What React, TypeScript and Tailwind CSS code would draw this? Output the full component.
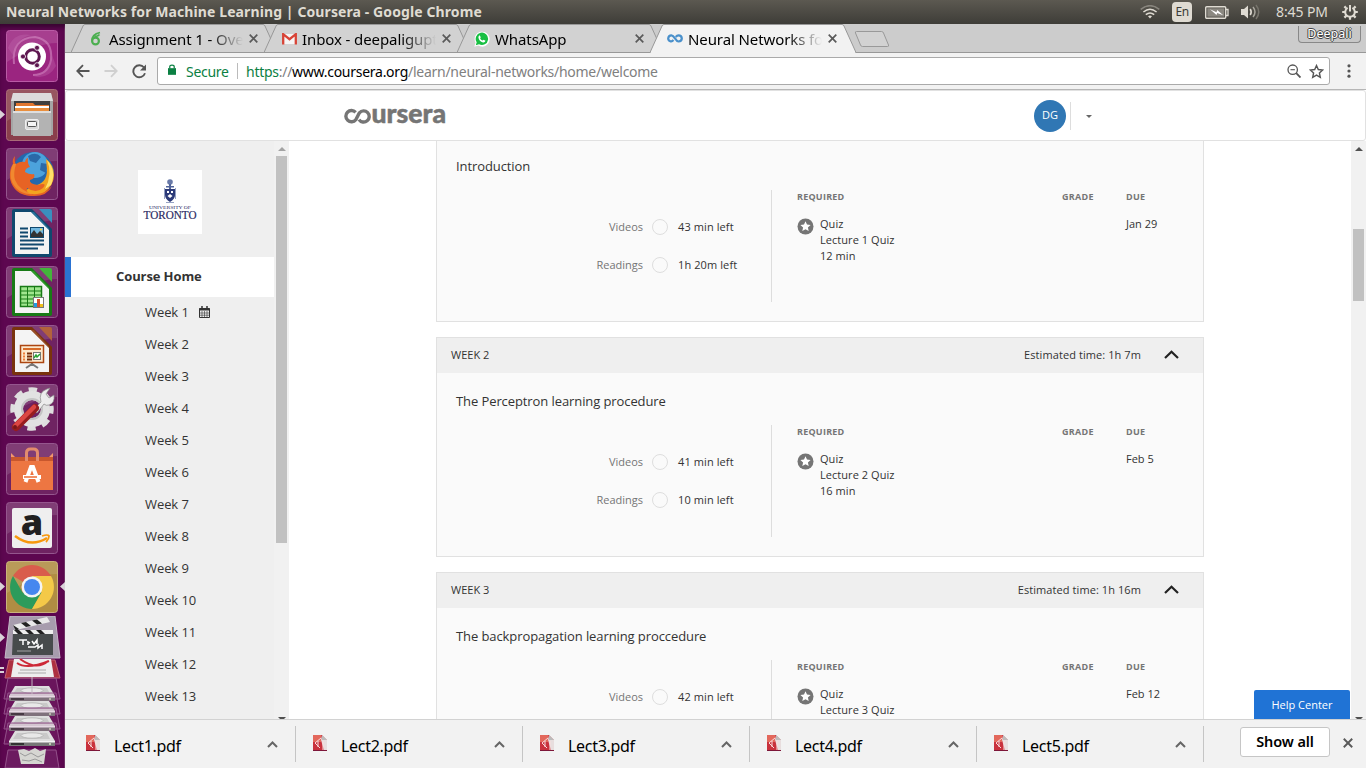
import React from "react";

const ui = "font-['Noto_Sans',sans-serif]";

function Titlebar() {
  return (
    <header className="flex h-6 shrink-0 items-center justify-between bg-gradient-to-b from-[#5c5951] to-[#3e3d38] pl-1.5 pr-[7px]">
      <h1 className="whitespace-nowrap text-[14px] font-bold leading-6 tracking-[0.1px] text-[#dfdbd2]">
        Neural Networks for Machine Learning | Coursera - Google Chrome
      </h1>
      <div className="flex items-center text-[#dfdbd2]">
        <svg width="20" height="14" viewBox="0 0 20 14" fill="none" stroke="currentColor" strokeWidth="1.5">
          <path d="M.7 4.3Q10-3 19.3 4.3" stroke="#88857d" />
          <path d="M3.4 7Q10 1.6 16.6 7" />
          <path d="M5.8 9.7Q10 6.2 14.2 9.7" />
          <path d="M8 11.2Q10 9.8 12 11.2L10 13.6Z" fill="currentColor" stroke="none" />
        </svg>
        <span className="ml-3 flex h-5 w-5 items-center justify-center rounded-sm bg-[#dfdbd2] text-[12px] tracking-[-0.5px] text-[#3c3b37]">En</span>
        <svg className="ml-[13px]" width="24" height="13" viewBox="0 0 24 13">
          <rect x=".7" y=".7" width="20" height="11.6" rx="1" fill="none" stroke="#dfdbd2" strokeWidth="1.4" />
          <rect x="2.3" y="2.3" width="17" height="8.4" fill="#8b8880" />
          <path d="M21 3.5h2v6h-2" fill="none" stroke="#dfdbd2" strokeWidth="1.3" />
          <path d="M5 3.2l6.5 3 .7-2.2 6 5.3-6-2.3-.7 2z" fill="#fff" />
        </svg>
        <svg className="ml-3" width="20" height="16" viewBox="0 0 20 16" fill="none">
          <path d="M0 5h3l4-3.5v13L3 11H0z" fill="#dfdbd2" />
          <path d="M9.2 5q2 3 0 6" stroke="#dfdbd2" strokeWidth="1.6" />
          <path d="M12 3q4 5 0 10" stroke="#a9a69d" strokeWidth="1.5" />
          <path d="M15 1q5.5 7 0 14" stroke="#77746c" strokeWidth="1.5" />
        </svg>
        <span className="ml-[15px] w-[53px] whitespace-nowrap text-[14px] leading-6 tracking-[-0.1px]">8:45 PM</span>
        <svg className="ml-3" width="18" height="18" viewBox="-9 -9 18 18" fill="none" stroke="currentColor">
          <path d="M-2.4-4.1A4.8 4.8 0 1 0 2.4-4.1" strokeWidth="2" />
          <path d="M0-7V-.5" strokeWidth="2" />
          <path d="M5 0h2.8M-5 0h-2.8M0 5v2.8M3.6 3.6l2 2M-3.6 3.6l-2 2M3.8-3.8l1.8-1.8M-3.8-3.8l-1.8-1.8" strokeWidth="2.2" />
        </svg>
      </div>
    </header>
  );
}

function Tile({ children, fill = "#6f2362", stroke = "#95568e" }: { children: React.ReactNode; fill?: string; stroke?: string }) {
  return (
    <svg className="shrink-0" width="52" height="52" viewBox="0 0 52 52">
      <rect x=".5" y=".5" width="51" height="51" rx="3" fill={fill} stroke={stroke} />
      <path d="M1 3q0-2 2-2h46q2 0 2 2v10Q30 13 1 32z" fill="#fff" opacity=".12" />
      {children}
    </svg>
  );
}

function OfficeDoc({ dark, light, children }: { dark: string; light: string; children: React.ReactNode }) {
  return (
    <Tile>
      <path d="M8 2h18l20 20v26q0 2-2 2H8q-2 0-2-2V4q0-2 2-2z" fill={dark} />
      <path d="M33 2h11q2 0 2 2v12z" fill={light} />
      <path d="M9 5h16l18 18v24H9z" fill="#f4f4f4" />
      <path d="M25 5l18 18V21.500L28 5z" fill={light} opacity=".55" />
      {children}
    </Tile>
  );
}

function Drive({ y }: { y: number }) {
  return (
    <g transform={`translate(0 ${y})`}>
      <path d="M8-8h48l4 21H4z" fill="#a45a98" fillOpacity=".18" stroke="#93518a" />
      <path d="M15 0h34l6 10H9z" fill="#dedede" />
      <path d="M17 2h30l3 6H13z" fill="#c9c9c9" />
      <ellipse cx="32" cy="4.5" rx="11" ry="2.7" fill="#e8e8e8" stroke="#aaa" strokeWidth=".7" />
      <path d="M9 10h46v5H9z" fill="#777" />
      <path d="M9 10h46v1.5H9z" fill="#f4f4f4" />
      <path d="M11 13h13" stroke="#333" strokeWidth="2" />
      <circle cx="50" cy="13" r="1" fill="#d6e8c3" />
    </g>
  );
}

function Launcher() {
  return (
    <aside className="relative flex w-[65px] shrink-0 flex-col bg-[#5d0750] shadow-[inset_0_5px_5px_-2px_#35052e,inset_-1px_0_0_#7b3a70]">
      <div className="flex flex-col gap-[7px] pl-1.5 pt-1.5">
        <Tile fill="#9b2580" stroke="#b95ba5">
          <path d="M8 34Q5 8 29 7q18 3 16 23-3 15-18 15" fill="none" stroke="#d48bc3" strokeWidth="2" opacity=".6" />
          <path d="M2 18Q8 2 25 5q-18 4-16 23M50 36q-8 14-23 10 16-3 19-21" fill="#c367ae" opacity=".35" />
          <circle cx="26" cy="26.5" r="14" fill="#fff" />
          <circle cx="26.5" cy="26.5" r="6.8" fill="none" stroke="#5e1750" strokeWidth="3" />
          <g stroke="#fff" strokeWidth="1.5"><path d="M15 26.500h5M30 20l3-5M30 33l3 5" /></g>
          <g fill="#5e1750" stroke="#fff" strokeWidth=".7"><circle cx="17" cy="26.5" r="2.5" /><circle cx="31" cy="17.8" r="2.5" /><circle cx="31" cy="35.2" r="2.5" /></g>
        </Tile>
        <Tile fill="#8a3f4c" stroke="#a96b78">
          <path d="M7 4h38l2 8v34H5V12z" fill="#a5a5a5" /><path d="M7 4h38l2 8H5z" fill="#dcdcdc" />
          <path d="M8 12h36v10H8z" fill="#3f3f3f" />
          <path d="M10 14h17l2 2h14v7H10z" fill="#e1762e" /><path d="M9 17h34v5H9z" fill="#fff" /><path d="M9 19h34v3H9z" fill="#e98f3e" />
          <path d="M7 22h38v25H7z" fill="#b3b3b3" /><path d="M7 22h38v2H7z" fill="#dedede" />
          <rect x="19.5" y="30.5" width="13" height="10" rx="1.5" fill="#d9d9d9" stroke="#eee" />
          <rect x="21.5" y="32.5" width="9" height="5" rx="1" fill="#f5f5f5" stroke="#555" />
        </Tile>
        <Tile>
          <circle cx="27" cy="25" r="21" fill="#2368ad" />
          <circle cx="29" cy="17" r="13" fill="#4ca2dc" /><path d="M22 8q8-5 13 1l-5 6-6-2zM35 15l7 1-2 9-6-3z" fill="#2a69a8" />
          <path d="M40 11Q48 17 48 27T38 45Q27 50 15 45L27 38Q41 36 41 22z" fill="#f2a41f" />
          <path d="M41 12Q51 23 45 37L39 41Q47 26 41 12" fill="#ffe06a" />
          <path d="M9 8q-1 6 1 8 4-3 9-2 1-4 3-4-1 5 2 9-5 1-5 5 5 3 9 2 2 4-4 6-1 4 8 5 10-3 5 3-7 6-16 0-2 7 10 6 9-1 15-8Q41 49 25 48 8 47 4 31 3 21 7 16q-1-5 2-8z" fill="#e76324" />
          <path d="M7 16Q1 30 10 40q7 7 17 6-14-4-18-14-2-6 1-16z" fill="#f59a35" opacity=".7" />
        </Tile>
        <OfficeDoc dark="#10486e" light="#3a8fbf">
          <g stroke="#10486e" strokeWidth="2"><path d="M14 21.500h8M14 25.500h8M14 29.500h8M14 33.500h24M14 37.500h24M14 41.500h18" /></g>
          <rect x="24.5" y="20.5" width="13" height="10" fill="#73b8df" stroke="#10486e" /><path d="M25 30v-3l3-4 3 4 3-3 3 3v3z" fill="#333" /><circle cx="35" cy="22.5" r="1" fill="#ffd83a" />
        </OfficeDoc>
        <OfficeDoc dark="#187a16" light="#43b53b">
          <rect x="14.5" y="20.5" width="21" height="20" fill="#a0e68e" stroke="#187a16" strokeWidth="1.5" />
          <path d="M14 25h22M14 29h22M14 33h22M14 37h22M21.500 20v21M28.500 20v21" stroke="#187a16" />
          <rect x="27.5" y="31.5" width="10" height="10" fill="#fff" stroke="#777" /><path d="M28 37h3v4h-3z" fill="#239be0" /><path d="M31 33h3v8h-3z" fill="#d7502b" /><path d="M34 38h3v3h-3z" fill="#eebf1b" />
        </OfficeDoc>
        <OfficeDoc dark="#79330d" light="#b2623c">
          <path d="M26 37v4M20 43l6-4 6 4" stroke="#777" strokeWidth="2" fill="none" />
          <rect x="14.5" y="20.5" width="23" height="17" fill="#fce8cc" stroke="#ac4611" strokeWidth="1.5" />
          <path d="M17 23h18v2H17z" fill="#d76b28" /><g strokeWidth="1.8" stroke="#77300b"><path d="M21 28.500h5M21 31.500h5M21 34.500h5" /></g><path d="M17 28.500h2M17 31.500h2M17 34.500h2" stroke="#ee7e39" strokeWidth="2" />
          <rect x="27.5" y="27.5" width="7" height="7" fill="#fff" stroke="#777" /><path d="M28 33l2-3 1 2 3-3" stroke="#25a332" fill="none" strokeWidth="1.5" />
        </OfficeDoc>
        <Tile>
          <circle cx="26" cy="25" r="19.5" fill="none" stroke="#dedede" strokeWidth="4.5" strokeDasharray="8.500 6.815" strokeDashoffset="4" />
          <circle cx="26" cy="25" r="13.5" fill="none" stroke="#e2e2e2" strokeWidth="9" /><circle cx="26" cy="25" r="10" fill="none" stroke="#c4c4c4" strokeWidth="2" />
          <path d="M27 26l8-8q-3-10 6-13l3-1-4 6 3 4 5-3q1 8-5 10-3 1-5-1l-7 9z" fill="#ececec" stroke="#888" strokeWidth=".7" />
          <path d="M10 43L29 24" stroke="#971d1e" strokeWidth="8" strokeLinecap="round" /><path d="M9 42L28 23" stroke="#db4643" strokeWidth="4.5" strokeLinecap="round" /><circle cx="9" cy="43" r="2" fill="#771818" />
        </Tile>
        <Tile>
          <path d="M5 14h42v33H5z" fill="#ed7642" /><path d="M5 14h42v4H5z" fill="#c8572d" /><path d="M5 10l4 4H5zM47 10l-4 4h4z" fill="#f2976d" />
          <path d="M20.500 18V10q0-4 4-4h3q4 0 4 4v8" fill="none" stroke="#e38c6d" strokeWidth="3" />
          <path d="M19.500 39l5.500-15h2l5.500 15" fill="none" stroke="#fff" strokeWidth="4" /><path d="M17 32h18v4H17z" fill="#fff" /><path d="M18 34h13" stroke="#ed6b32" strokeWidth="1.5" />
        </Tile>
        <Tile>
          <rect x="6" y="6" width="40" height="40" rx="2" fill="#efefef" />
          <text x="26" y="33" textAnchor="middle" fontFamily="Open Sans, sans-serif" fontSize="36" fontWeight="800" fill="#202020">a</text>
          <path d="M9 34q16 12 32 2" stroke="#f7980d" strokeWidth="2.5" fill="none" /><path d="M36 34q6-2 7 0 0 3-3 6" stroke="#f7980d" strokeWidth="1.8" fill="none" />
        </Tile>
        <Tile fill="#b08d43" stroke="#cab27c">
          <path d="M26 26L7 15A22 22 0 0 1 45 15H26z" fill="#d95c4c" />
          <path d="M16.500 31.500L7 15A22 22 0 0 0 26 48L35.500 31.500z" fill="#2c9b5b" />
          <path d="M26 15h19A22 22 0 0 1 26 48l9.500-16.500z" fill="#f4c948" />
          <circle cx="26" cy="26" r="10.5" fill="#f4f4f4" /><circle cx="26" cy="26" r="8" fill="#4687ef" />
        </Tile>
      </div>
      <svg className="absolute left-0 top-[592px]" width="65" height="152" viewBox="0 0 65 152">
        <path d="M9 44h46l5 18H5z" fill="#ad3040" stroke="#c26170" />
        <path d="M14 43h37l3 18H11z" fill="#eee" /><path d="M17 47q10 7 32-2M20 43q17 12 28 2" fill="none" stroke="#cd2937" strokeWidth="2" /><path d="M20 54h26M18 57h28" stroke="#aaa" />
        <path d="M10 0h45l5 42H5z" fill="#a79cad" stroke="#c5b9c8" />
        <path d="M13 15h40v24H12z" fill="#474b4c" /><path d="M13 14h40v4H13z" fill="#eee" /><path d="M14 14l4 4h5l-4-4zM25 14l4 4h5l-4-4zM36 14l4 4h5l-4-4z" fill="#222" />
        <path d="M13 9L47 1l3 5-34 8z" fill="#e9e9e9" /><path d="M21 7l5 4 5-1-5-4zM32 4.500l5 4 5-1-5-4zM13 9l6 4-3 2z" fill="#222" />
        <path d="M19 24h8M23 24v5M28 29v-3l2 1M32 25l2 3 3-4v4M28 31h7l3-2v3l4-3v4" stroke="#fff" strokeWidth="1.5" fill="none" /><path d="M17 35h14" stroke="#a4a4a4" />
        <Drive y={70} /><Drive y={85} /><Drive y={100} /><Drive y={115} />
        <path d="M8 134h48l3 18H5z" fill="#9a5791" fillOpacity=".25" stroke="#93518a" />
        <path d="M18 134l6-1 5 2 6-3 5 3 6-2-2 15H21z" fill="#d6d6d2" /><path d="M20 137l5 3 6-3 7 4 6-3M22 144l7 1 6-2 7 3" stroke="#999" fill="none" />
        <path d="M32 61v17" stroke="#c1b5bf" />
      </svg>
      <svg className="absolute left-0 top-0" width="65" height="744" viewBox="0 0 65 744">
        <g fill="#d9d2d8"><path d="M0 86l5 4.500-5 4.500zM0 558l5 4.500-5 4.500zM65 558l-5 4.500 5 4.500zM0 609l5 4.500-5 4.500zM0 643h4v2H0zM0 647h4v2H0z" /></g>
      </svg>
    </aside>
  );
}

function Close({ size = 9 }: { size?: number }) {
  return (
    <svg width={size} height={size} viewBox="0 0 9 9" stroke="#5a5a5a" strokeWidth="1.7">
      <path d="M.7.7l7.600 7.600M8.300.7L.7 8.300" />
    </svg>
  );
}

function Tab({ icon, title, active }: { icon: React.ReactNode; title: string; active?: boolean }) {
  return (
    <div className="relative -mr-[13px] flex h-[29px] w-[206px] shrink-0 items-center pl-[17px]">
      <svg className="absolute left-0 top-0" width="206" height="29" viewBox="0 0 206 29">
        <path d="M0 28.500L12 2q.6-1.500 2-1.500h178q1.400 0 2 1.500l12 26.500" fill={active ? "#f2f2f2" : "#d2d2d2"} stroke="#989898" />
        {active && <path d="M1 28.500h204" stroke="#f2f2f2" />}
        {!active && <path d="M0 28.500h206" stroke="#989898" />}
      </svg>
      <span className="relative flex w-4 justify-center">{icon}</span>
      <span className="relative ml-[5px] w-[134px] overflow-hidden whitespace-nowrap text-[15px] leading-7 tracking-[-0.1px] text-black [mask-image:linear-gradient(to_right,#000_100px,transparent_134px)]">{title}</span>
      <span className="relative ml-1.5"><Close /></span>
    </div>
  );
}

function Tabs() {
  return (
    <div className="flex h-[29px] shrink-0 border-b border-[#989898] bg-[#ccc] pl-1.5">
      <Tab title="Assignment 1 - Ove" icon={<svg width="14" height="15" viewBox="0 0 14 15" fill="none" stroke="#4caf50"><circle cx="6.5" cy="10" r="3.4" strokeWidth="2.2" /><path d="M3.200 9.500Q2.500 3.500 11 1.500M5.500 5q3 1 5-1.500" strokeWidth="1.7" /></svg>} />
      <Tab title="Inbox - deepaligupt" icon={<svg width="15" height="12" viewBox="0 0 15 12"><path d="M1 1h13v10H1z" fill="#f5f5f5" /><path d="M1.200 11.500V1.200l6.300 5 6.300-5v10.300" fill="none" stroke="#d84437" strokeWidth="2.3" /></svg>} />
      <Tab title="WhatsApp" icon={<svg width="16" height="16" viewBox="0 0 16 16"><path d="M.3 15.700l1.200-4A7.500 7.500 0 1 1 4.300 14.600z" fill="#fff" /><path d="M1.800 14.200l.9-3A6.200 6.200 0 1 1 5 13.300z" fill="#18bf43" /><path d="M5.600 4.300l1.200 2-.7 1q.8 1.600 2.400 2.300l1-.9 2 1.100q-.6 2-2.500 1.700Q5.100 10.500 4.400 6.500q.1-1.600 1.200-2.200z" fill="#fff" /></svg>} />
      <Tab active title="Neural Networks fo" icon={<svg width="16" height="9" viewBox="0 0 16 9" fill="none" stroke="#4a90cb" strokeWidth="2.2"><path d="M6.500 6.100Q4.900 7.900 3.300 7.200 1.100 6.500 1.200 4.300 1.600 1.500 4.400 1.300 6 1.200 8 4.300T11.500 7.500Q14.700 7.200 14.800 4.400 14.600 1.300 11.500 1.300 10 1.300 8.800 3" /></svg>} />
      <svg className="ml-[11px] mt-1.5" width="37" height="19" viewBox="0 0 37 19"><path d="M2.500 1.500h25q1.500 0 2 1.500l5 12q.6 1.500-1 1.500h-25q-1.500 0-2-1.500l-5-12q-.6-1.500 1-1.500z" fill="#d2d2d2" stroke="#999" /></svg>
      <span className="ml-auto mr-[5px] mt-0.5 flex h-[17px] w-[63px] items-center justify-center rounded-b-[4px] border border-t-0 border-[#888] bg-[#c7c7c7] text-[12.5px] text-white [text-shadow:1px_0_#444,-1px_0_#444,0_1px_#444,0_-1px_#444]">Deepali</span>
    </div>
  );
}

function Toolbar() {
  return (
    <div className="flex h-[37px] shrink-0 items-center border-b border-[#b6b6b6] bg-[#f2f2f2] pl-[11px]">
      <svg width="14" height="14" viewBox="0 0 14 14" stroke="#555" strokeWidth="1.8" fill="none"><path d="M13.500 7H1.500M7 1.200L1.300 7 7 12.800" /></svg>
      <svg className="ml-3.5" width="14" height="14" viewBox="0 0 14 14" stroke="#d0d0d0" strokeWidth="1.8" fill="none"><path d="M.5 7h12M7 1.200L12.700 7 7 12.800" /></svg>
      <svg className="ml-3.5" width="15" height="15" viewBox="0 0 15 15" stroke="#555" strokeWidth="1.9" fill="none"><path d="M13 9.300A6 6 0 1 1 12 3.500" /><path d="M14 .5v6H8z" fill="#555" stroke="none" /></svg>
      <div className="ml-2.5 flex h-7 w-[1173px] items-center rounded-[3px] border border-[#aaa] bg-white pl-2.5">
        <svg className="-mt-1" width="8" height="11" viewBox="0 0 9 12"><path d="M0 4.500h9V12H0z" fill="#0b8043" /><path d="M2 5V3q0-2 2.500-2T7 3v2" fill="none" stroke="#0b8043" strokeWidth="1.4" /></svg>
        <span className="ml-2.5 w-[43px] whitespace-nowrap text-[14px] tracking-[-0.3px] text-[#0b8043]">Secure</span>
        <span className="ml-2 mr-2 h-4 w-px bg-[#bbb]" />
        <span className="whitespace-nowrap text-[14px] tracking-[-0.27px] text-[#808080]"><span className="text-[#0b8043]">https</span>://<span className="text-black">www.coursera.org</span>/learn/neural-networks/home/welcome</span>
        <svg className="ml-auto" width="14" height="14" viewBox="0 0 14 14" fill="none" stroke="#555" strokeWidth="1.3"><circle cx="5.7" cy="5.7" r="4.7" /><path d="M9.200 9.200L13.500 13.500" strokeWidth="1.8" /><path d="M3.500 5.700h4.400" strokeWidth="1.1" /></svg>
        <svg className="ml-2 mr-[5px]" width="15" height="15" viewBox="0 0 15 15" fill="none" stroke="#555" strokeWidth="1.4"><path d="M7.500 1.500l1.800 4 4.400.5-3.300 3 .9 4.300-3.800-2.200-3.800 2.200.9-4.300-3.300-3 4.400-.5z" /></svg>
      </div>
      <svg className="ml-[17px]" width="4" height="14" viewBox="0 0 4 14" fill="#555"><circle cx="2" cy="1.8" r="1.6" /><circle cx="2" cy="7" r="1.6" /><circle cx="2" cy="12.2" r="1.6" /></svg>
    </div>
  );
}

function SiteHeader() {
  return (
    <div className="flex h-[51px] shrink-0 items-center rounded-[3px] border border-[#e1e1e1] bg-white">
      <svg className="ml-[278px]" width="103" height="18" viewBox="0 0 103 18">
        <path d="M11.600 5.400A5.600 5.600 0 1 0 11.800 12.700L15.400 5.800A5.600 5.600 0 1 1 15 12.600" fill="none" stroke="#757575" strokeWidth="3.4" strokeLinejoin="round" />
        <text x="27.5" y="15.8" textLength="74.5" lengthAdjust="spacingAndGlyphs" fontFamily="Lato, sans-serif" fontWeight="900" fontSize="27" fill="#757575" stroke="#757575" strokeWidth=".5">ursera</text>
      </svg>
      <span className="ml-[587px] flex h-8 w-8 items-center justify-center rounded-full bg-[#3077b4] text-[11px] text-white">DG</span>
      <span className="ml-1 h-7 w-px bg-[#ddd]" />
      <svg className="ml-[15px] mt-0.5" width="6" height="3" viewBox="0 0 6 3"><path d="M0 0h6L3 3z" fill="#666" /></svg>
    </div>
  );
}

function Sidebar() {
  const weeks = Array.from({ length: 13 }, (_, i) => i + 1);
  return (
    <nav className="flex w-[224px] shrink-0 bg-[#efefef]">
      <div className="flex w-[209px] flex-col">
        <div className="ml-[73px] mt-[29px] flex h-16 w-16 shrink-0 flex-col items-center bg-white pt-[9px] text-[#2b2a63]">
          <svg width="12" height="25" viewBox="0 0 12 25"><circle cx="6" cy="3" r="2.8" fill="#697aa8" /><path d="M5 5h2v5H5zM2 7h8v1.500H2z" fill="#51649a" /><path d="M1 10h10v6q0 4-5 7-5-3-5-7z" fill="#2c3a78" /><path d="M3 12h2v2H3zM7 12h2v2H7zM3.500 17L6 15l2.500 2L6 19z" fill="#fff" /><path d="M.5 9v11M11.500 9v11M2 23.500h8" stroke="#94a1c2" /></svg>
          <svg width="56" height="16" viewBox="0 0 56 16" fill="currentColor" fontFamily="Liberation Serif, serif"><text x="7" y="5" fontSize="5" textLength="42" lengthAdjust="spacingAndGlyphs">UNIVERSITY OF</text><text x="1.5" y="15.2" fontSize="11.5" textLength="53" lengthAdjust="spacingAndGlyphs" stroke="currentColor" strokeWidth=".2">TORONTO</text></svg>
        </div>
        <div className="mt-[23px] flex h-10 shrink-0 items-center border-l-[6px] border-[#2a73d3] bg-white pl-[45px] text-[13px] font-bold tracking-[-0.1px] text-[#333]">Course Home</div>
        {weeks.map((w) => (
          <div key={w} className="flex h-8 shrink-0 items-center pl-20 text-[13px] tracking-[-0.08px] text-[#333]">
            Week {w}
            {w === 1 && <svg className="-mt-0.5 ml-2.5" width="11" height="12" viewBox="0 0 11 12" fill="none" stroke="#333"><path d="M.5 2.500h10v9H.5z" /><path d="M0 3.500h11" strokeWidth="2" /><path d="M3 0v3.500M8 0v3.500" strokeWidth="1.5" /><path d="M3 5v6.500M5.500 5v6.500M8 5v6.500M1 7h9M1 9.200h9" strokeWidth=".6" /></svg>}
          </div>
        ))}
      </div>
      <div className="flex w-[15px] flex-col items-center justify-between bg-[#f1f1f1] pt-[6px]">
        <div className="flex flex-col items-center">
          <svg width="8" height="4" viewBox="0 0 8 4"><path d="M0 4l4-4 4 4z" fill="#a3a3a3" /></svg>
          <div className="mt-[5px] h-[387px] w-[11px] bg-[#c1c1c1]" />
        </div>
        <svg width="8" height="2" viewBox="0 0 8 2"><path d="M0 0h8L6 2H2z" fill="#505050" /></svg>
      </div>
    </nav>
  );
}

type Week = { n: number; time: string; title: string; videos: string; readings: string; quiz: string; due: string };
const data: Week[] = [
  { n: 1, time: "2h 15m", title: "Introduction", videos: "43 min", readings: "1h 20m", quiz: "12 min", due: "Jan 29" },
  { n: 2, time: "1h 7m", title: "The Perceptron learning procedure", videos: "41 min", readings: "10 min", quiz: "16 min", due: "Feb 5" },
  { n: 3, time: "1h 16m", title: "The backpropagation learning proccedure", videos: "42 min", readings: "10 min", quiz: "12 min", due: "Feb 12" },
];

function Progress({ label, left }: { label: string; left: string }) {
  return (
    <div className="flex h-[38px] items-center">
      <span className="w-[206px] text-right text-[#757575]">{label}</span>
      <span className="ml-[9px] h-4 w-4 rounded-full border-[1.5px] border-[#dedede]" />
      <span className="ml-2.5 tracking-[0.1px]">{left} left</span>
    </div>
  );
}

function WeekCard({ w }: { w: Week }) {
  return (
    <section className="flex h-[220px] w-[768px] shrink-0 flex-col border border-[#e1e1e1] bg-[#fafafa] text-[11px] text-[#333]">
      <div className="flex h-[35px] shrink-0 items-center bg-[#efefef] pl-3.5 pr-6">
        <span>WEEK {w.n}</span>
        <span className="ml-auto tracking-[0.08px]">Estimated time: {w.time}</span>
        <svg className="-mt-0.5 ml-[23px]" width="15" height="9" viewBox="0 0 15 9" fill="none" stroke="#222" strokeWidth="2.2"><path d="M1 8l6.500-6.300L14 8" /></svg>
      </div>
      <h2 className="ml-[19px] mt-[18px] text-[13px] leading-5 tracking-[-0.09px]">{w.title}</h2>
      <div className="mt-3.5 flex h-28">
        <div className="w-[335px] border-r border-[#ddd] pt-[18px]">
          <Progress label="Videos" left={w.videos} />
          <Progress label="Readings" left={w.readings} />
        </div>
        <div className="w-[265px] pl-[25px]">
          <h3 className="text-[9px] font-bold leading-[14px] tracking-[0.24px] text-[#757575]">REQUIRED</h3>
          <div className="mt-3 flex gap-1.5 leading-4">
            <svg className="mt-0.5" width="17" height="17" viewBox="0 0 17 17"><circle cx="8.5" cy="8.5" r="8" fill="#757575" /><path d="M8.500 3.300l1.500 3.300 3.600.4-2.700 2.400.8 3.600-3.200-1.800L5.300 13l.8-3.600L3.400 7l3.600-.4z" fill="#fff" /></svg>
            <div className="tracking-[0.05px]">Quiz<br />Lecture {w.n} Quiz<br />{w.quiz}</div>
          </div>
        </div>
        <h3 className="ml-[25px] w-16 text-[9px] font-bold leading-[14px] tracking-[0.3px] text-[#757575]">GRADE</h3>
        <div>
          <h3 className="text-[9px] font-bold leading-[14px] tracking-[0.3px] text-[#757575]">DUE</h3>
          <div className="mt-3 leading-4">{w.due}</div>
        </div>
      </div>
    </section>
  );
}

function Downloads() {
  return (
    <footer className="flex h-[49px] shrink-0 items-center border-t border-[#d2d2d2] bg-[#f2f2f2] pl-1">
      {[1, 2, 3, 4, 5].map((n) => (
        <div key={n} className="flex h-9 w-[227px] shrink-0 items-center border-r border-[#c5c5c5] pl-[17px] pr-[17px]">
          <svg className="-mt-0.5" width="14" height="16" viewBox="0 0 14 16"><path d="M0 0h9l5 5v11H0z" fill="#c9323d" /><path d="M0 0h8v7H0z" fill="#e3685c" /><path d="M9 0l5 5v10h-3L8 5z" fill="#e8dede" /><path d="M9 0v5h5z" fill="#bbb" /><path d="M8 3L2 8l5 5M5 6v6M10 6v9" stroke="#f8dede" fill="none" /><path d="M0 15h14v1H0z" fill="#7d1639" /></svg>
          <span className="ml-[14px] mt-[3px] text-[16px] leading-6 tracking-[-0.3px] text-black">Lect{n}.pdf</span>
          <svg className="ml-auto" width="11" height="7" viewBox="0 0 11 7" fill="none" stroke="#666" strokeWidth="2"><path d="M1 6l4.500-4.500L10 6" /></svg>
        </div>
      ))}
      <button className="-mt-1 ml-9 h-[30px] w-[90px] rounded-[3px] border border-[#c6c6c6] bg-white text-[14.5px] font-semibold tracking-[-0.1px] text-black">Show all</button>
      <span className="-mt-0.5 ml-[13px]"><Close size={10} /></span>
    </footer>
  );
}

export default function App() {
  return (
    <div className={`flex h-[768px] w-[1366px] flex-col overflow-hidden bg-white ${ui}`}>
      <Titlebar />
      <div className="flex min-h-0 flex-1">
        <Launcher />
        <div className="flex min-w-0 flex-1 flex-col">
          <Tabs />
          <Toolbar />
          <div className="flex min-h-0 flex-1 flex-col font-['Open_Sans',sans-serif]">
            <SiteHeader />
            <div className="flex min-h-0 flex-1 overflow-hidden">
              <Sidebar />
              <main className="relative flex-1">
                <div className="-mt-[39px] ml-[147px] flex flex-col gap-[15px]">
                  {data.map((w) => <WeekCard key={w.n} w={w} />)}
                </div>
                <div className="absolute bottom-0 right-px flex h-[29px] w-24 items-center justify-center rounded-t-[2px] bg-[#2073d5] pt-px text-[11px] text-white">Help Center</div>
              </main>
              <div className="flex w-[15px] shrink-0 flex-col items-center justify-between bg-[#f1f1f1] pt-1.5">
                <div className="flex flex-col items-center">
                  <svg width="8" height="4" viewBox="0 0 8 4"><path d="M0 4l4-4 4 4z" fill="#505050" /></svg>
                  <div className="mt-[78px] h-[72px] w-[11px] bg-[#c1c1c1]" />
                </div>
                <svg width="8" height="2" viewBox="0 0 8 2"><path d="M0 0h8L6 2H2z" fill="#505050" /></svg>
              </div>
            </div>
          </div>
          <Downloads />
        </div>
      </div>
    </div>
  );
}
